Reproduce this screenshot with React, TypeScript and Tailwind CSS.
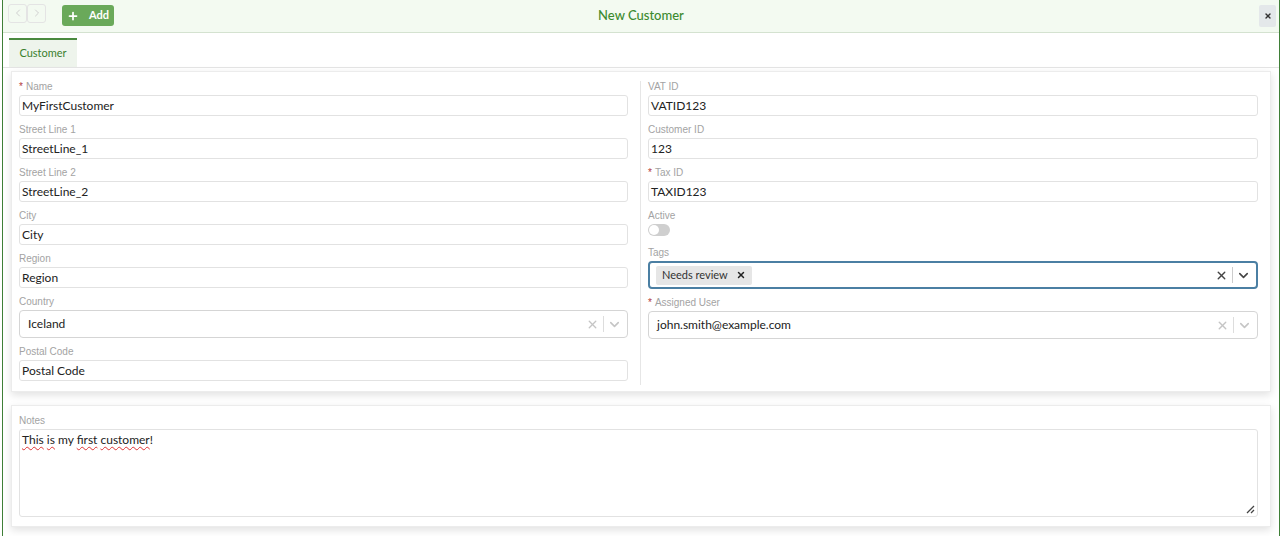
import React from "react";
import { ChevronLeft, ChevronRight, Plus, X, ChevronDown } from "lucide-react";

const font = "font-['Lato','Open_Sans',sans-serif]";

const Label = ({ text, required }: { text: string; required?: boolean }) => (
  <div className="h-[12px] text-[10px] leading-[12px] text-[#a3a3a3] font-['Liberation_Sans',sans-serif] mb-[2px]">
    {required && <span className="text-[#b33a3a] mr-[3px]">*</span>}
    {text}
  </div>
);

const Input = ({ label, value, required, last }: { label: string; value: string; required?: boolean; last?: boolean }) => (
  <div className={last ? "" : "mb-[8px]"}>
    <Label text={label} required={required} />
    <div className="h-[21px] border border-[#e2e2e2] rounded-[3px] px-[2px] flex items-center text-[12px] text-[#222]">
      {value}
    </div>
  </div>
);

const SelectBox = ({ value, tag, focus }: { value?: string; tag?: string; focus?: boolean }) => (
  <div
    className={
      focus
        ? "h-[28px] border-2 border-[#4b7fa3] rounded-[4px] flex items-center pl-[6px] pr-[2px]"
        : "h-[28px] border border-[#d5d5d5] rounded-[4px] flex items-center pl-[8px] pr-[2px]"
    }
  >
    <div className="flex-1 flex items-center text-[12px] text-[#222]">
      {tag ? (
        <span className="bg-[#e6e6e6] rounded-[2px] h-[19px] px-[6px] flex items-center text-[11px] text-[#333]">
          {tag}
          <X className="ml-[8px] h-[10px] w-[10px] text-[#222]" strokeWidth={3.5} />
        </span>
      ) : (
        value
      )}
    </div>
    <X
      className={focus ? "h-[13px] w-[13px] text-[#444] mx-[4px]" : "h-[13px] w-[13px] text-[#c5c5c5] mx-[4px]"}
      strokeWidth={2.5}
    />
    <div className={focus ? "w-px h-[16px] bg-[#ccc]" : "w-px h-[16px] bg-[#ddd]"} />
    <ChevronDown
      className={focus ? "h-[15px] w-[15px] text-[#444] mx-[3px]" : "h-[15px] w-[15px] text-[#c5c5c5] mx-[3px]"}
      strokeWidth={2.5}
    />
  </div>
);

export default function App() {
  return (
    <div className={`w-[1283px] h-[536px] bg-white ${font} overflow-hidden`}>
      <div className="ml-[2px] mr-[3px] h-full border-l border-r border-[#3f7f37] flex flex-col">
        {/* header */}
        <div className="h-[33px] shrink-0 bg-[#f3faf1] border-b border-[#d4e2d0] flex items-center pl-[5px] pr-[3px] relative">
          <div className="flex items-center mt-[-6px]">
            <div className="h-[19px] w-[19px] border border-[#e4e4e4] rounded-[3px] flex items-center justify-center">
              <ChevronLeft className="h-[12px] w-[12px] text-[#d0d0d0]" />
            </div>
            <div className="h-[19px] w-[19px] border border-[#e4e4e4] rounded-[3px] flex items-center justify-center">
              <ChevronRight className="h-[12px] w-[12px] text-[#d0d0d0]" />
            </div>
          </div>
          <button className="ml-[16px] h-[21px] w-[52px] bg-[#6aa95a] rounded-[3px] flex items-center pl-[5px] text-white text-[11px] font-bold mt-[-1px]">
            <Plus className="h-[12px] w-[12px]" strokeWidth={3.5} />
            <span className="ml-[10px]">Add</span>
          </button>
          <div className="absolute left-0 right-0 text-center text-[13px] text-[#3c8a2f] font-medium pointer-events-none">
            New Customer
          </div>
          <div className="ml-auto h-[22px] w-[17px] bg-[#e4e8ea] rounded-[2px] flex items-center justify-center">
            <X className="h-[8px] w-[8px] text-[#333]" strokeWidth={4} />
          </div>
        </div>

        {/* tabs */}
        <div className="mt-[5px] px-[6px] border-b border-[#e4e4e4] flex shrink-0">
          <div className="h-[29px] w-[68px] bg-[#eef4ec] border-t-2 border-[#4a8a3f] flex items-center justify-center text-[11px] text-[#3a7f2e]">
            Customer
          </div>
        </div>

        <div className="flex-1 pl-[8px] pt-[3px]">
          {/* main form card */}
          <div className="w-[1260px] border border-[#ececec] bg-white shadow-[0_3px_8px_rgba(0,0,0,0.12)] flex pl-[7px] pt-[9px] pb-[10px]">
            <div className="w-[609px]">
              <Input label="Name" value="MyFirstCustomer" required />
              <Input label="Street Line 1" value="StreetLine_1" />
              <Input label="Street Line 2" value="StreetLine_2" />
              <Input label="City" value="City" />
              <Input label="Region" value="Region" />
              <div className="mb-[8px]">
                <Label text="Country" />
                <SelectBox value="Iceland" />
              </div>
              <Input label="Postal Code" value="Postal Code" last />
            </div>
            <div className="w-px bg-[#e6e6e6] ml-[12px] mr-[7px] mb-[-4px]" />
            <div className="w-[610px]">
              <Input label="VAT ID" value="VATID123" />
              <Input label="Customer ID" value="123" />
              <Input label="Tax ID" value="TAXID123" required />
              <div className="mb-[11px]">
                <Label text="Active" />
                <div className="h-[12px] w-[22px] rounded-full bg-[#cfcfcf] flex items-center px-[1px] mt-[1px]">
                  <div className="h-[10px] w-[10px] rounded-full bg-white" />
                </div>
              </div>
              <div className="mb-[8px]">
                <Label text="Tags" />
                <SelectBox tag="Needs review" focus />
              </div>
              <div>
                <Label text="Assigned User" required />
                <SelectBox value="john.smith@example.com" />
              </div>
            </div>
          </div>

          {/* notes card */}
          <div className="w-[1260px] mt-[13px] border border-[#ececec] bg-white shadow-[0_3px_8px_rgba(0,0,0,0.12)] pl-[7px] pr-[12px] pt-[9px] pb-[9px]">
            <Label text="Notes" />
            <div className="relative h-[88px] border border-[#e2e2e2] rounded-[3px] px-[2px] pt-[1px] text-[12px] text-[#222]">
              <span className="underline decoration-wavy decoration-[#d33] decoration-1 underline-offset-2">This</span>{" "}
              <span className="underline decoration-wavy decoration-[#d33] decoration-1 underline-offset-2">is</span> my{" "}
              <span className="underline decoration-wavy decoration-[#d33] decoration-1 underline-offset-2">first</span>{" "}
              <span className="underline decoration-wavy decoration-[#d33] decoration-1 underline-offset-2">customer</span>!
              <svg className="absolute right-[2px] bottom-[2px]" width="10" height="10" viewBox="0 0 10 10">
                <path d="M9 2 L2 9 M9 6 L6 9" stroke="#444" strokeWidth="1.3" />
              </svg>
            </div>
          </div>
        </div>
      </div>
    </div>
  );
}
